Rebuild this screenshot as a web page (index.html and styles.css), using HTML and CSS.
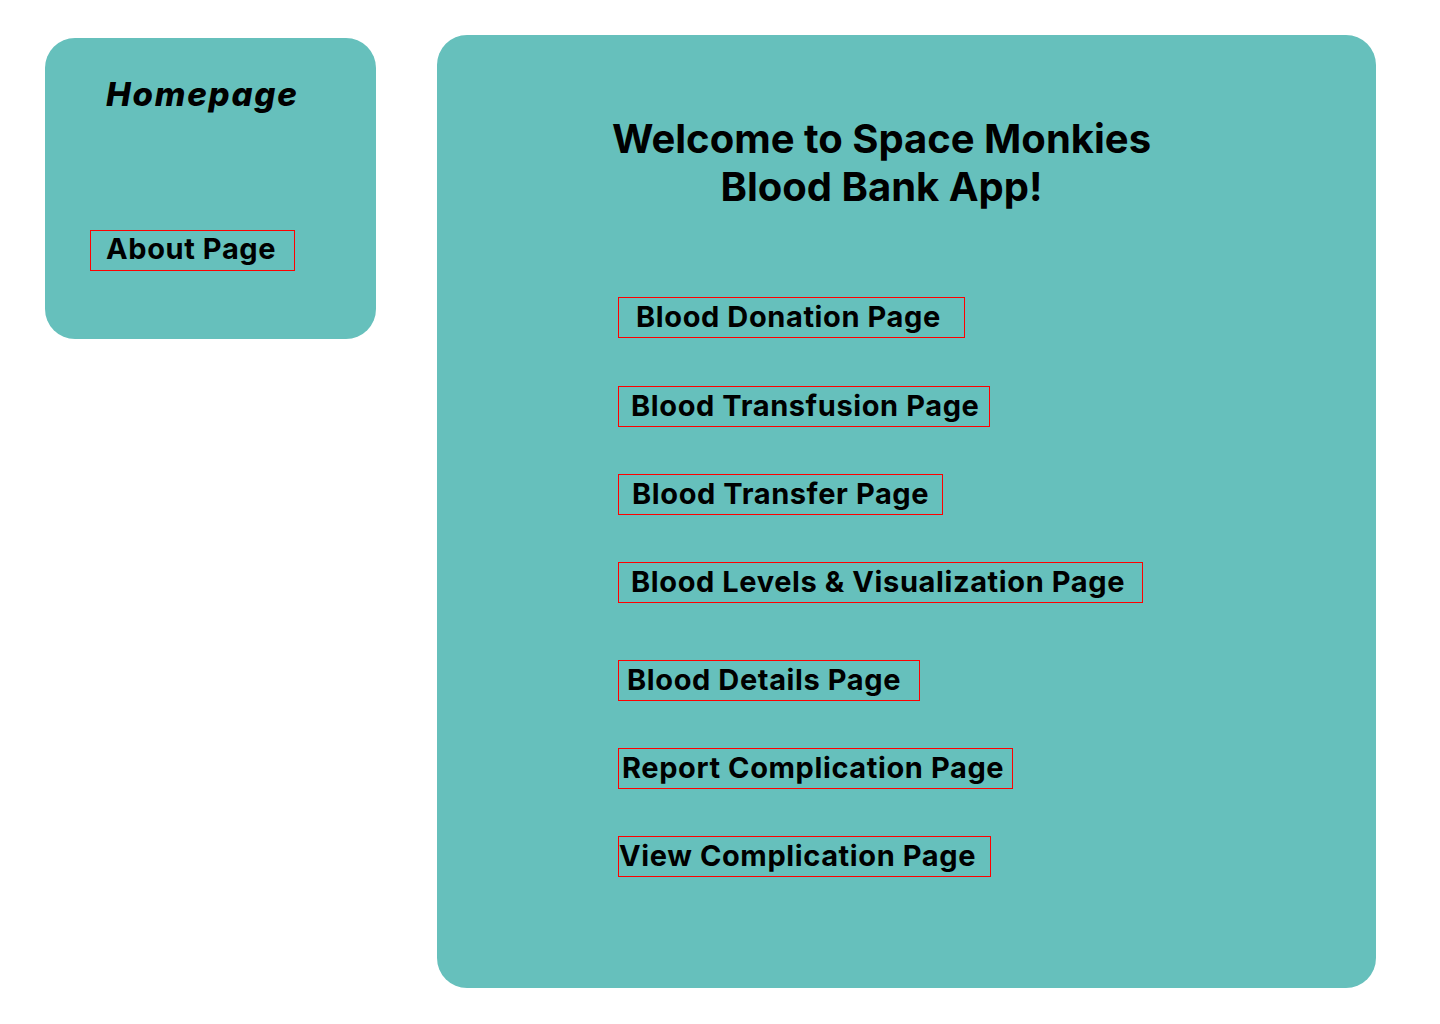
FILE: index.html
```html
<!DOCTYPE html>
<html lang="en">
<head>
<meta charset="utf-8">
<title>Space Monkies Blood Bank</title>
<link rel="stylesheet" href="styles.css">
</head>
<body>
<div class="page">
  <nav class="side-card">
    <h2 class="side-title">Homepage</h2>
    <a class="link-box about" href="#">About Page</a>
  </nav>
  <main class="main-card">
    <h1 class="welcome">Welcome to Space Monkies<br>Blood Bank App!</h1>
    <div class="links">
      <a class="link-box l1" href="#">Blood Donation Page</a>
      <a class="link-box l2" href="#">Blood Transfusion Page</a>
      <a class="link-box l3" href="#">Blood Transfer Page</a>
      <a class="link-box l4" href="#">Blood Levels &amp; Visualization Page</a>
      <a class="link-box l5" href="#">Blood Details Page</a>
      <a class="link-box l6" href="#">Report Complication Page</a>
      <a class="link-box l7" href="#">View Complication Page</a>
    </div>
  </main>
</div>
</body>
</html>
```
FILE: styles.css
```css
* { box-sizing: border-box; }
html, body { margin: 0; padding: 0; background: #ffffff; }
body { font-family: Inter, "Noto Sans", sans-serif; color: #000; }

.page {
  display: flex;
  align-items: flex-start;
  gap: 61px;
  padding: 35px 0 0 45px;
}

.side-card {
  margin-top: 3px;
  width: 331px;
  height: 301px;
  background: #66c0bc;
  border-radius: 30px;
  padding: 36px 0 0 45px;
  display: flex;
  flex-direction: column;
  align-items: flex-start;
}

.side-title {
  margin: 0 0 0 16px;
  font-size: 33px;
  line-height: 40px;
  font-weight: 800;
  font-style: italic;
  letter-spacing: 1.8px;
}

.link-box {
  display: block;
  height: 41px;
  border: 1px solid #ff0000;
  font-size: 29px;
  line-height: 38px;
  font-weight: 700;
  letter-spacing: 0.6px;
  color: #000;
  text-decoration: none;
  white-space: nowrap;
}

.about { margin-top: 116px; width: 205px; padding-left: 15px; line-height: 36px; }

.main-card {
  width: 939px;
  height: 953px;
  background: #66c0bc;
  border-radius: 30px;
  padding: 80px 0 0 0;
}

.welcome {
  margin: 0;
  padding-right: 50px;
  text-align: center;
  font-size: 40px;
  line-height: 48px;
  font-weight: 700;
}

.links {
  margin: 86px 0 0 181px;
  display: flex;
  flex-direction: column;
  align-items: flex-start;
}

.l1 { width: 347px; padding-left: 17px; }
.l2 { width: 372px; padding-left: 12px; margin-top: 48px; }
.l3 { width: 325px; padding-left: 13px; margin-top: 47px; }
.l4 { width: 525px; padding-left: 12px; margin-top: 47px; }
.l5 { width: 302px; padding-left: 8px; margin-top: 57px; }
.l6 { width: 395px; padding-left: 3px; margin-top: 47px; }
.l7 { width: 373px; padding-left: 0; margin-top: 47px; }
```
